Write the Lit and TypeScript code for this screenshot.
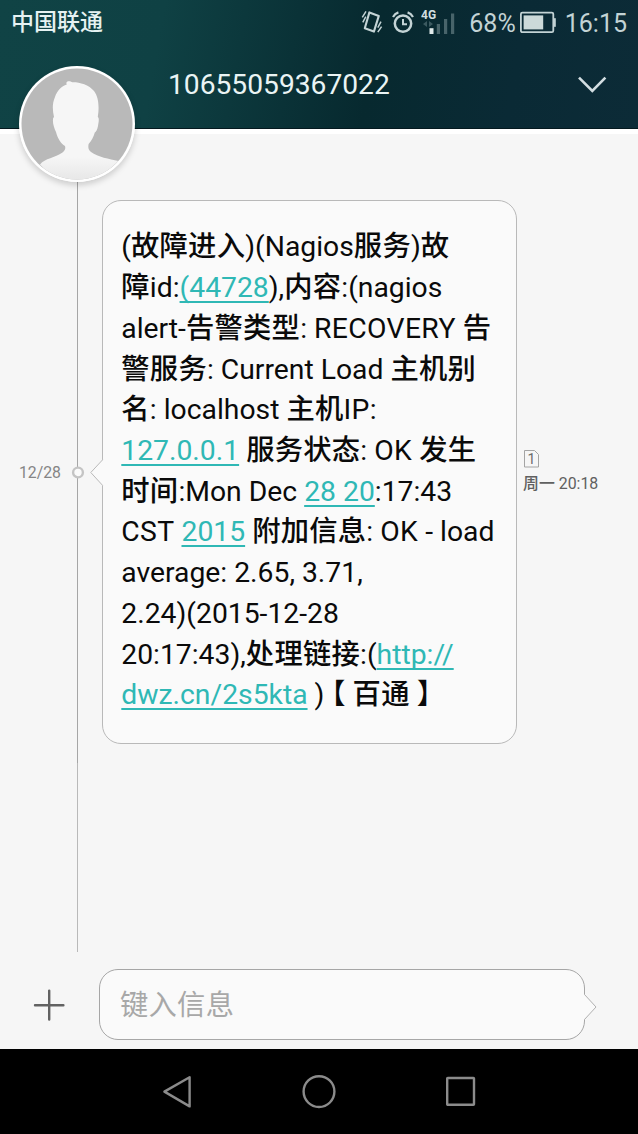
import { LitElement, html, css, svg, nothing } from "lit";
import { customElement, property } from "lit/decorators.js";

type Run = { t: string; link?: boolean };

const MESSAGE: Run[][] = [
  [{ t: "(故障进入)(Nagios服务)故" }],
  [{ t: "障id:" }, { t: "(44728", link: true }, { t: "),内容:(nagios" }],
  [{ t: "alert-告警类型: RECOVERY 告" }],
  [{ t: "警服务: Current Load 主机别" }],
  [{ t: "名: localhost 主机IP:" }],
  [{ t: "127.0.0.1", link: true }, { t: " 服务状态: OK 发生" }],
  [{ t: "时间:Mon Dec " }, { t: "28 20", link: true }, { t: ":17:43" }],
  [{ t: "CST " }, { t: "2015", link: true }, { t: " 附加信息: OK - load" }],
  [{ t: "average: 2.65, 3.71," }],
  [{ t: "2.24)(2015-12-28" }],
  [{ t: "20:17:43),处理链接:(" }, { t: "http://", link: true }],
  [{ t: "dwz.cn/2s5kta", link: true }, { t: " )【 百通 】" }],
];

/* Han runs are set one step heavier than the Latin text around them; all-caps words are tracked out slightly. */
const mixed = (text: string) =>
  text.split(/([\u4e00-\u9fff]+|【|[A-Z]{2,})/).filter(Boolean).map((part) => {
    if (part === "【") return html`<span class="open">${part}</span>`;
    if (/^[A-Z]{2,}$/.test(part)) return html`<span class="caps">${part}</span>`;
    return /[\u4e00-\u9fff]/.test(part) ? html`<span class="han">${part}</span>` : part;
  });

@customElement("status-bar")
class StatusBar extends LitElement {
  static styles = css`
    :host { display: flex; align-items: center; height: 46px; padding: 0 11px; color: #c3d3d5; font-size: 25px; }
    .carrier { flex: 1; font-size: 23px; color: #e6f2f2; font-weight: 500; line-height: 30px; }
    svg { display: block; flex: none; }
    .vibrate { margin: 0 9px 2px 0; }
    .alarm { margin: 0 7px 2px 0; }
    .signal { margin: 0 13px 1px 0; }
    .battery { margin: 0 9px 0 4px; }
    .net { font: 700 12px Roboto, sans-serif; }
  `;
  render() {
    return html`
      <span class="carrier">中国联通</span>
      <svg class="vibrate" width="22" height="24" viewBox="0 0 22 24" fill="none" stroke="#c3d3d5" stroke-width="2.1">
        <path d="M8.4 2.4 L17.8 5.9 L12.9 21.6 L3.8 18.2 Z" stroke-linejoin="round" />
        <path d="M5 1.4 L1.3 7.4 M4.8 6.6 L1.8 12.4 M20 11.6 L16.8 17.6 M20.6 16.6 L16.8 22.2" stroke-width="1.5" />
      </svg>
      <svg class="alarm" width="22" height="24" viewBox="0 0 22 24" fill="none" stroke="#c3d3d5">
        <circle cx="11" cy="13.6" r="8.2" stroke-width="2.5" />
        <path d="M11 9 V14.2 H15" stroke-width="2" />
        <path d="M1 7 Q2.8 3.6 6.4 2.4 M21 7 Q19.2 3.6 15.6 2.4" stroke-width="2.2" />
      </svg>
      <svg class="signal" width="35" height="28" viewBox="0 0 35 28">
        <text class="net" x="0" y="9.8" fill="#d2dfe0">4G</text>
        <path d="M6 12 V18 L2 15 Z M8 12 V18 L12 15 Z" fill="#3b5a60" />
        <rect x="8.5" y="19.2" width="4" height="5.8" fill="#e0eaea" />
        <path d="M15.8 15 h3.2 v10 h-3.2z M23 10 h3.2 v15 h-3.2z M30 4.5 h3.2 V25 h-3.2z" fill="#48646a" />
      </svg>
      <span>68%</span>
      <svg class="battery" width="36" height="24" viewBox="0 0 36 24">
        <rect x="0.9" y="1.6" width="32.4" height="19.6" rx="1.5" fill="none" stroke="#c3d3d5" stroke-width="1.8" />
        <rect x="3.6" y="4.4" width="19.6" height="14" fill="#ccd9d9" />
        <rect x="33.6" y="7.2" width="2.2" height="8.6" fill="#c3d3d5" />
      </svg>
      <span>16:15</span>
    `;
  }
}

@customElement("contact-avatar")
class ContactAvatar extends LitElement {
  static styles = css`
    :host { display: block; width: 116px; height: 116px; border-radius: 50%; box-shadow: 0 3px 6px rgba(0, 0, 0, 0.18); }
    svg { display: block; }
  `;
  render() {
    return html`
      <svg width="116" height="116" viewBox="0 0 116 116">
        <defs>
          <clipPath id="disc"><circle cx="58" cy="58" r="55.5" /></clipPath>
          <linearGradient id="fade" x1="0" y1="0" x2="0" y2="1">
            <stop offset="0.75" stop-color="#f6f6f6" />
            <stop offset="1" stop-color="#e6e6e6" />
          </linearGradient>
        </defs>
        <circle cx="58" cy="58" r="58" fill="#fff" />
        <g clip-path="url(#disc)">
          <rect width="116" height="116" fill="#b9b9b9" />
          <path fill="url(#fade)" d="M48.5 15.5 C50 14.8 52 15.6 53.5 16.2 C60 16 70 18.5 75 25 C79 30 80 38 79.4 46 Q79 49 78.8 51 C80.5 52 79.6 56 79 60 C78.3 64 77 65.5 75.8 66.5 C74.5 71 72.5 75 69.6 78 C69 82 69.3 84 72 86 C79 91 90 93 99.5 95 Q82 114 58 116 Q34 114 21 98.5 C26 92 36 92 43.5 86.5 C46.5 84.5 46.6 82 46 80 C42 78 38.5 72 37 66 C35 62 33.6 57 34 53.5 C34 52 34.4 51.5 35 51 C33.5 44 33 38 36 31 C38 25 42.5 20 47.8 18.5 C47 17.5 47.4 16 48.5 15.5 Z" />
        </g>
      </svg>
    `;
  }
}

@customElement("message-bubble")
class MessageBubble extends LitElement {
  @property({ attribute: false }) lines: Run[][] = [];
  static styles = css`
    :host { display: block; position: relative; box-sizing: border-box; width: 415px; height: 544px; padding: 26.4px 0 0 18.3px;
      border: 1px solid #b9b9b9; border-radius: 19px; background: #fafafa; color: #0a0a0a; font-size: 28.3px; }
    .line { height: 40.73px; line-height: 40.73px; white-space: pre; }
    .link { color: #2fb8b5; text-decoration: underline; text-decoration-thickness: 1.6px; text-underline-offset: 4px; text-decoration-skip-ink: none; }
    .han { font-weight: 500; letter-spacing: 0.25px; }
    .caps { letter-spacing: 0.35px; }
    .open { font-feature-settings: "halt"; padding-left: 7px; }
    .tail { position: absolute; left: -13px; top: 258px; }
  `;
  render() {
    return html`
      <svg class="tail" width="14" height="28" viewBox="0 0 14 28">
        <path d="M14 0.8 H12.6 L0.8 13.5 L12.6 26.4 H14" fill="#fafafa" />
        <path d="M12.6 0.8 L0.8 13.5 L12.6 26.4" fill="none" stroke="#b9b9b9" />
      </svg>
      ${this.lines.map(
        (runs) => html`<div class="line">${runs.map((r) => (r.link ? html`<span class="link">${r.t}</span>` : html`<span>${mixed(r.t)}</span>`))}</div>`
      )}
    `;
  }
}

@customElement("nav-bar")
class NavBar extends LitElement {
  static styles = css`
    :host { display: flex; justify-content: center; align-items: center; gap: 106px; height: 85px; background: #000; }
    svg { display: block; }
  `;
  private icon(shape: unknown) {
    return html`<svg width="36" height="36" viewBox="0 0 36 36" fill="none" stroke="#8b8b8b" stroke-width="2.4" stroke-linejoin="round">${shape ?? nothing}</svg>`;
  }
  render() {
    return html`
      ${this.icon(svg`<path d="M30.6 3.2 V32.4 L5.4 17.6 Z" />`)}
      ${this.icon(svg`<circle cx="18" cy="17.6" r="15.4" />`)}
      ${this.icon(svg`<rect x="4.2" y="4" width="26.8" height="26.8" rx="0.6" />`)}
    `;
  }
}

@customElement("app-root")
class AppRoot extends LitElement {
  static styles = css`
    :host { display: flex; flex-direction: column; width: 638px; height: 1134px; overflow: hidden; background: #f6f6f6;
      font-family: Roboto, "Noto Sans CJK SC", sans-serif; }
    .top { position: relative; flex: none; height: 129px; box-sizing: border-box; border-bottom: 1px solid #04191f;
      background: linear-gradient(100deg, #104345 0%, #0f4144 25%, #07292f 58%, #0a2a35 80%, #0c2b37 100%); }
    .title { display: flex; align-items: center; justify-content: space-between; height: 77px; padding: 0 31px 0 168px; color: #eaf4f4; font-size: 28.2px; }
    .avatar { position: absolute; left: 19px; top: 66px; z-index: 1; }
    .strip { flex: none; height: 5px; background: #fff; }
    .thread { flex: none; height: 818px; display: grid; grid-template-columns: 61px 34px 7px 415px 1fr; }
    .date { padding-top: 330px; text-align: right; font-size: 15.8px; line-height: 18px; color: #858585; }
    .rail { justify-self: center; display: block; }
    .msg { grid-column: 4; margin-top: 66px; }
    .meta { padding: 315px 0 0 6px; color: #606060; font-size: 15.9px; line-height: 20px; white-space: nowrap; }
    .day { font-weight: 500; }
    .sim { display: block; margin-bottom: 6px; }
    .simno { font: 14px Roboto, sans-serif; }
    .compose { flex: none; height: 97px; display: flex; align-items: flex-start; box-sizing: border-box; padding: 17px 0 0 33px; }
    .plus { margin: 20px 34px 0 0; }
    .field { position: relative; box-sizing: border-box; width: 486px; height: 71px; padding-left: 20px; border: 1px solid #a6a6a6;
      border-radius: 19px; background: #fafafa; color: #a8a8a8; font-size: 28.3px; line-height: 72px; letter-spacing: 0.25px; }
    .point { position: absolute; right: -13px; top: 24px; }
  `;
  render() {
    return html`
      <header class="top">
        <status-bar></status-bar>
        <div class="title">
          <span>10655059367022</span>
          <svg width="30" height="20" viewBox="0 0 30 20" fill="none" stroke="#d3dee2" stroke-width="2.6">
            <path d="M2 2.6 L15.3 16 L28.4 2.6" />
          </svg>
        </div>
        <contact-avatar class="avatar"></contact-avatar>
      </header>
      <div class="strip"></div>
      <main class="thread">
        <div class="date">12/28</div>
        <svg class="rail" width="14" height="818" viewBox="0 0 14 818">
          <path d="M6.5 0 V629" stroke="#a6a6a6" />
          <path d="M6.5 629 V818" stroke="#b9b9b9" />
          <circle cx="7" cy="338.5" r="4.9" fill="#fafafa" stroke="#c4c4c4" stroke-width="2.4" />
        </svg>
        <message-bubble class="msg" .lines=${MESSAGE}></message-bubble>
        <div class="meta">
          <svg class="sim" width="18" height="19" viewBox="0 0 18 19">
            <path d="M1.5 1.5 H11.5 L15.5 5.5 V18 H1.5 Z" fill="none" stroke="#a4a4a4" />
            <text class="simno" x="4.4" y="15" fill="#6c6c6c">1</text>
          </svg>
          <span class="day">周一</span> 20:18
        </div>
      </main>
      <footer class="compose">
        <svg class="plus" width="32" height="32" viewBox="0 0 32 32" stroke="#626262" stroke-width="2.4" stroke-linecap="round">
          <path d="M16.2 1.6 V30.6 M2 16.2 H30.4" />
        </svg>
        <div class="field">
          键入信息
          <svg class="point" width="14" height="26" viewBox="0 0 14 26">
            <path d="M0 0.5 H1.5 L13 13 L1.5 25.5 H0" fill="#fafafa" />
            <path d="M1.5 0.5 L13 13 L1.5 25.5" fill="none" stroke="#b0b0b0" />
          </svg>
        </div>
      </footer>
      <nav-bar></nav-bar>
    `;
  }
}
